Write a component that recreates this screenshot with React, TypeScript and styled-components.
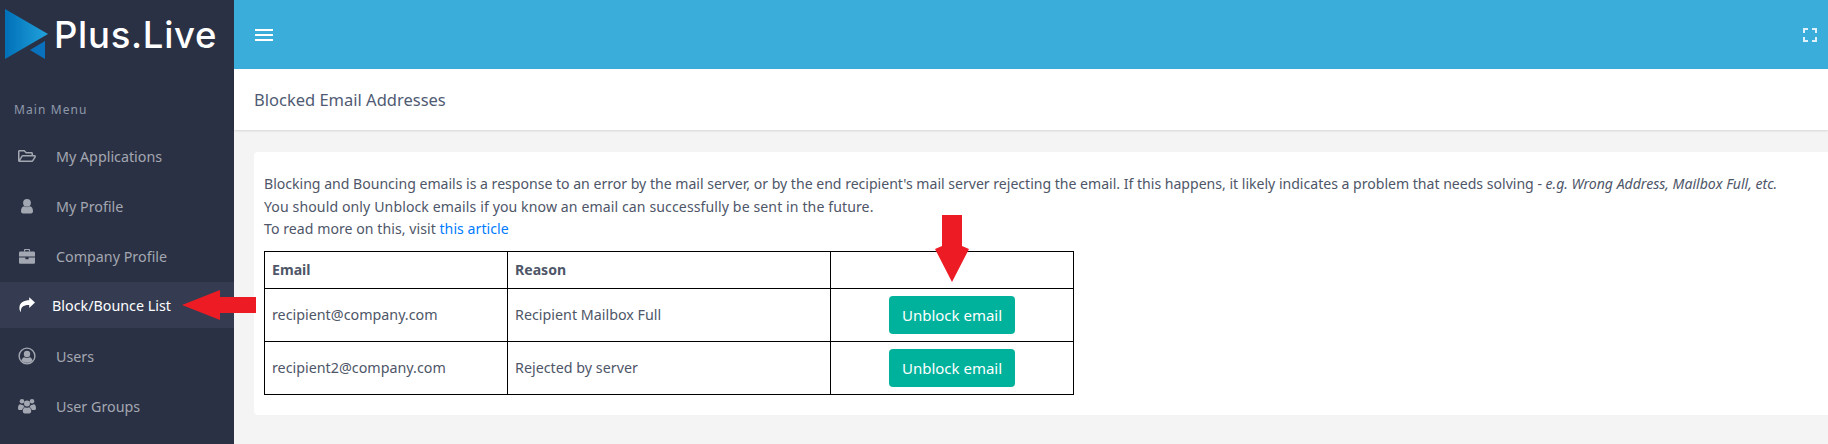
import { ReactNode } from "react";
import styled, { createGlobalStyle } from "styled-components";
import { FaRegFolderOpen } from "react-icons/fa";

const GlobalStyle = createGlobalStyle`
  html, body { margin: 0; padding: 0; }
  body {
    font-family: "Noto Sans", "Open Sans", sans-serif;
    background: #f4f4f4;
    overflow: hidden;
  }
`;

const Page = styled.div`
  position: relative;
  display: flex;
  width: 1828px;
  height: 444px;
  overflow: hidden;
`;

const Sidebar = styled.aside`
  width: 234px;
  flex-shrink: 0;
  background: #2b3144;
`;

const Brand = styled.div`
  height: 69px;
  display: flex;
  align-items: center;
  padding-left: 5px;
`;

const BrandName = styled.span`
  font-family: "Inter", sans-serif;
  font-size: 36.5px;
  font-weight: 500;
  letter-spacing: 0.7px;
  color: #fff;
`;

const MenuLabel = styled.div`
  padding: 33px 0 0 14px;
  height: 29px;
  font-size: 12px;
  line-height: 16px;
  letter-spacing: 1.1px;
  color: #8e99ab;
`;

const MenuRow = styled.div<{ $active?: boolean }>`
  height: ${(p) => (p.$active ? "46px" : "50px")};
  margin-top: ${(p) => (p.$active ? "1px" : "0")};
  margin-bottom: ${(p) => (p.$active ? "3px" : "0")};
  display: flex;
  align-items: center;
  padding-left: 18px;
  background: ${(p) => (p.$active ? "#353c52" : "transparent")};
  color: ${(p) => (p.$active ? "#fff" : "#a3a7b1")};
  font-size: 14.3px;
`;

const MenuIcon = styled.span<{ $active?: boolean }>`
  width: ${(p) => (p.$active ? "34px" : "38px")};
  display: flex;
  font-size: 18px;
`;

const Main = styled.main`
  flex: 1;
  min-width: 0;
`;

const TopBar = styled.header`
  height: 69px;
  background: #3badda;
  display: flex;
  align-items: center;
  justify-content: space-between;
  padding: 0 11px 0 21px;
`;

const Burger = styled.div`
  width: 18px;
  height: 12px;
  border-top: 2px solid #fff;
  border-bottom: 2px solid #fff;
  box-sizing: border-box;
  display: flex;
  align-items: center;

  &::before {
    content: "";
    width: 100%;
    height: 2px;
    background: #fff;
  }
`;

const TitleBar = styled.div`
  height: 61px;
  background: #fff;
  display: flex;
  align-items: center;
  padding-left: 20px;
  box-shadow: 0 1px 2px rgba(0, 0, 0, 0.12);
  font-size: 16.5px;
  color: #4f5b73;
`;

const Content = styled.div`
  padding: 22px 0 0 20px;
`;

const Card = styled.section`
  background: #fff;
  border-radius: 4px 0 0 4px;
  height: 263px;
  box-sizing: border-box;
  padding: 21px 10px;
  font-size: 14.1px;
  line-height: 22.5px;
  color: #4e5668;
`;

const Intro = styled.div`
  margin: 0 0 10px;
`;

const IntroLine = styled.div<{ $track?: number }>`
  letter-spacing: ${(p) => p.$track ?? 0}px;
  white-space: nowrap;
`;

const ArticleLink = styled.a`
  color: #007bff;
  text-decoration: none;
`;

const Table = styled.table`
  width: 810px;
  border-collapse: collapse;
  table-layout: fixed;
`;

const HeadCell = styled.th<{ $w?: number }>`
  width: ${(p) => (p.$w ? `${p.$w}px` : "auto")};
  height: 35px;
  padding: 1px 7px 0;
  border: 1px solid #000;
  text-align: left;
  font-weight: 700;
`;

const Cell = styled.td<{ $center?: boolean }>`
  height: ${(p) => (p.$center ? "52px" : "50px")};
  padding: ${(p) => (p.$center ? "0 7px" : "2px 7px 0")};
  border: 1px solid #000;
  font-size: 14.3px;
  text-align: ${(p) => (p.$center ? "center" : "left")};
`;

const UnblockButton = styled.button`
  width: 126px;
  height: 38px;
  border: 0;
  border-radius: 4px;
  background: #00b29c;
  color: #fff;
  font-family: inherit;
  font-size: 15px;
  vertical-align: middle;
`;

const OverlayArrow = styled.svg`
  position: absolute;
  fill: #ed1c24;
`;

const SideArrow = styled(OverlayArrow)`
  left: 182px;
  top: 290px;
`;

const DownArrow = styled(OverlayArrow)`
  left: 935px;
  top: 215px;
`;

function Logo() {
  return (
    <svg width="49" height="52" viewBox="0 0 49 52">
      <defs>
        <linearGradient id="logoFill" x1="0" x2="1" y1="0" y2="0">
          <stop offset="0" stopColor="#0070b8" />
          <stop offset="1" stopColor="#22a3dc" />
        </linearGradient>
      </defs>
      <polygon points="0,0 43,25 0,50" fill="url(#logoFill)" />
      <polygon points="25,41 40,32 40,50" fill="#0a72bd" />
    </svg>
  );
}

function FullscreenIcon() {
  return (
    <svg width="14" height="14" viewBox="0 0 14 14" fill="none" stroke="#dff1fa" strokeWidth="2">
      <path d="M1 5V1H5M9 1H13V5M13 9V13H9M5 13H1V9" />
    </svg>
  );
}

function UserIcon() {
  return (
    <svg width="18" height="18" viewBox="0 0 18 18" fill="currentColor">
      <circle cx="9" cy="5.8" r="3.9" />
      <path d="M3 14.2C3 11.4 4.2 9.6 6 9.3C7.6 10.4 10.4 10.4 12 9.3C13.8 9.6 15 11.4 15 14.2C15 15.6 14.2 16.4 13 16.4H5C3.8 16.4 3 15.6 3 14.2Z" />
    </svg>
  );
}

function BriefcaseIcon() {
  return (
    <svg width="18" height="18" viewBox="0 0 18 18" fill="currentColor">
      <path d="M6 4.6V2.9C6 2.3 6.4 1.9 7 1.9H11C11.6 1.9 12 2.3 12 2.9V4.6H10.8V3.1H7.2V4.6Z" />
      <path d="M2.4 4.4H15.6C16.4 4.4 17 5 17 5.8V9.6H1V5.8C1 5 1.6 4.4 2.4 4.4Z" />
      <path d="M1 10.6H7.4V12.2H10.6V10.6H17V15.4C17 16.2 16.4 16.8 15.6 16.8H2.4C1.6 16.8 1 16.2 1 15.4Z" />
    </svg>
  );
}

function ForwardIcon() {
  return (
    <svg width="18" height="18" viewBox="0 0 18 18" fill="currentColor">
      <path d="M17 6.6L11.2 1.2V4.2C6.4 4.2 1.4 6 1.4 12C1.4 13.6 2 15 2.6 15.8C2.8 16.1 3.1 15.9 3 15.6C2.4 11.6 5 9 11.2 9V12Z" />
    </svg>
  );
}

function UserCircleIcon() {
  return (
    <svg width="18" height="18" viewBox="0 0 18 18" fill="none">
      <circle cx="9" cy="9" r="7.9" stroke="currentColor" strokeWidth="1.4" />
      <circle cx="9" cy="7" r="3.2" fill="currentColor" />
      <path
        d="M3.4 13.4C4 11.4 5 10.4 6.3 10.2C7.8 11.1 10.2 11.1 11.7 10.2C13 10.4 14 11.4 14.6 13.4C13.2 15 11.2 15.8 9 15.8C6.8 15.8 4.8 15 3.4 13.4Z"
        fill="currentColor"
      />
    </svg>
  );
}

function UsersIcon() {
  return (
    <svg width="18" height="18" viewBox="0 0 18 18" fill="currentColor">
      <circle cx="4" cy="4.2" r="2.3" />
      <circle cx="14" cy="4.2" r="2.3" />
      <circle cx="9" cy="6.6" r="3" />
      <path d="M0 11C0 8.6 1 7.2 2.2 7.2C3 7.8 4 8 5.2 7.9C5.6 9 6 9.6 6.6 10.1C5.4 10.6 4.6 11.6 4.2 13H1.4C0.6 13 0 12.4 0 11Z" />
      <path d="M18 11C18 8.6 17 7.2 15.8 7.2C15 7.8 14 8 12.8 7.9C12.4 9 12 9.6 11.4 10.1C12.6 10.6 13.4 11.6 13.8 13H16.6C17.4 13 18 12.4 18 11Z" />
      <path d="M4.8 14.2C4.8 11.9 5.8 10.4 7 10.2C8.2 11 9.8 11 11 10.2C12.2 10.4 13.2 11.9 13.2 14.2C13.2 15.6 12.4 16.4 11.2 16.4H6.8C5.6 16.4 4.8 15.6 4.8 14.2Z" />
    </svg>
  );
}

interface MenuEntry {
  label: string;
  icon: ReactNode;
  active?: boolean;
}

const menu: MenuEntry[] = [
  { label: "My Applications", icon: <FaRegFolderOpen /> },
  { label: "My Profile", icon: <UserIcon /> },
  { label: "Company Profile", icon: <BriefcaseIcon /> },
  { label: "Block/Bounce List", icon: <ForwardIcon />, active: true },
  { label: "Users", icon: <UserCircleIcon /> },
  { label: "User Groups", icon: <UsersIcon /> },
];

const blocked = [
  { email: "recipient@company.com", reason: "Recipient Mailbox Full" },
  { email: "recipient2@company.com", reason: "Rejected by server" },
];

export default function App() {
  return (
    <Page>
      <GlobalStyle />
      <Sidebar>
        <Brand>
          <Logo />
          <BrandName>Plus.Live</BrandName>
        </Brand>
        <MenuLabel>Main Menu</MenuLabel>
        {menu.map((item) => (
          <MenuRow key={item.label} $active={item.active}>
            <MenuIcon $active={item.active}>{item.icon}</MenuIcon>
            {item.label}
          </MenuRow>
        ))}
      </Sidebar>
      <Main>
        <TopBar>
          <Burger />
          <FullscreenIcon />
        </TopBar>
        <TitleBar>Blocked Email Addresses</TitleBar>
        <Content>
          <Card>
            <Intro>
              <IntroLine $track={-0.015}>
                Blocking and Bouncing emails is a response to an error by the mail server, or by the end recipient's
                mail server rejecting the email. If this happens, it likely indicates a problem that needs solving -{" "}
                <em>e.g. Wrong Address, Mailbox Full, etc.</em>
              </IntroLine>
              <IntroLine $track={0.1}>
                You should only Unblock emails if you know an email can successfully be sent in the future.
              </IntroLine>
              <IntroLine $track={0.05}>
                To read more on this, visit <ArticleLink href="#">this article</ArticleLink>
              </IntroLine>
            </Intro>
            <Table>
              <thead>
                <tr>
                  <HeadCell $w={228}>Email</HeadCell>
                  <HeadCell $w={308}>Reason</HeadCell>
                  <HeadCell />
                </tr>
              </thead>
              <tbody>
                {blocked.map((row) => (
                  <tr key={row.email}>
                    <Cell>{row.email}</Cell>
                    <Cell>{row.reason}</Cell>
                    <Cell $center>
                      <UnblockButton>Unblock email</UnblockButton>
                    </Cell>
                  </tr>
                ))}
              </tbody>
            </Table>
          </Card>
        </Content>
      </Main>
      <SideArrow width="74" height="30" viewBox="0 0 74 30">
        <polygon points="0,15 38,0 38,7 74,7 74,23 38,23 38,30" />
      </SideArrow>
      <DownArrow width="34" height="67" viewBox="0 0 34 67">
        <polygon points="7,0 27,0 27,31 34,34 17,67 0,34 7,31" />
      </DownArrow>
    </Page>
  );
}
